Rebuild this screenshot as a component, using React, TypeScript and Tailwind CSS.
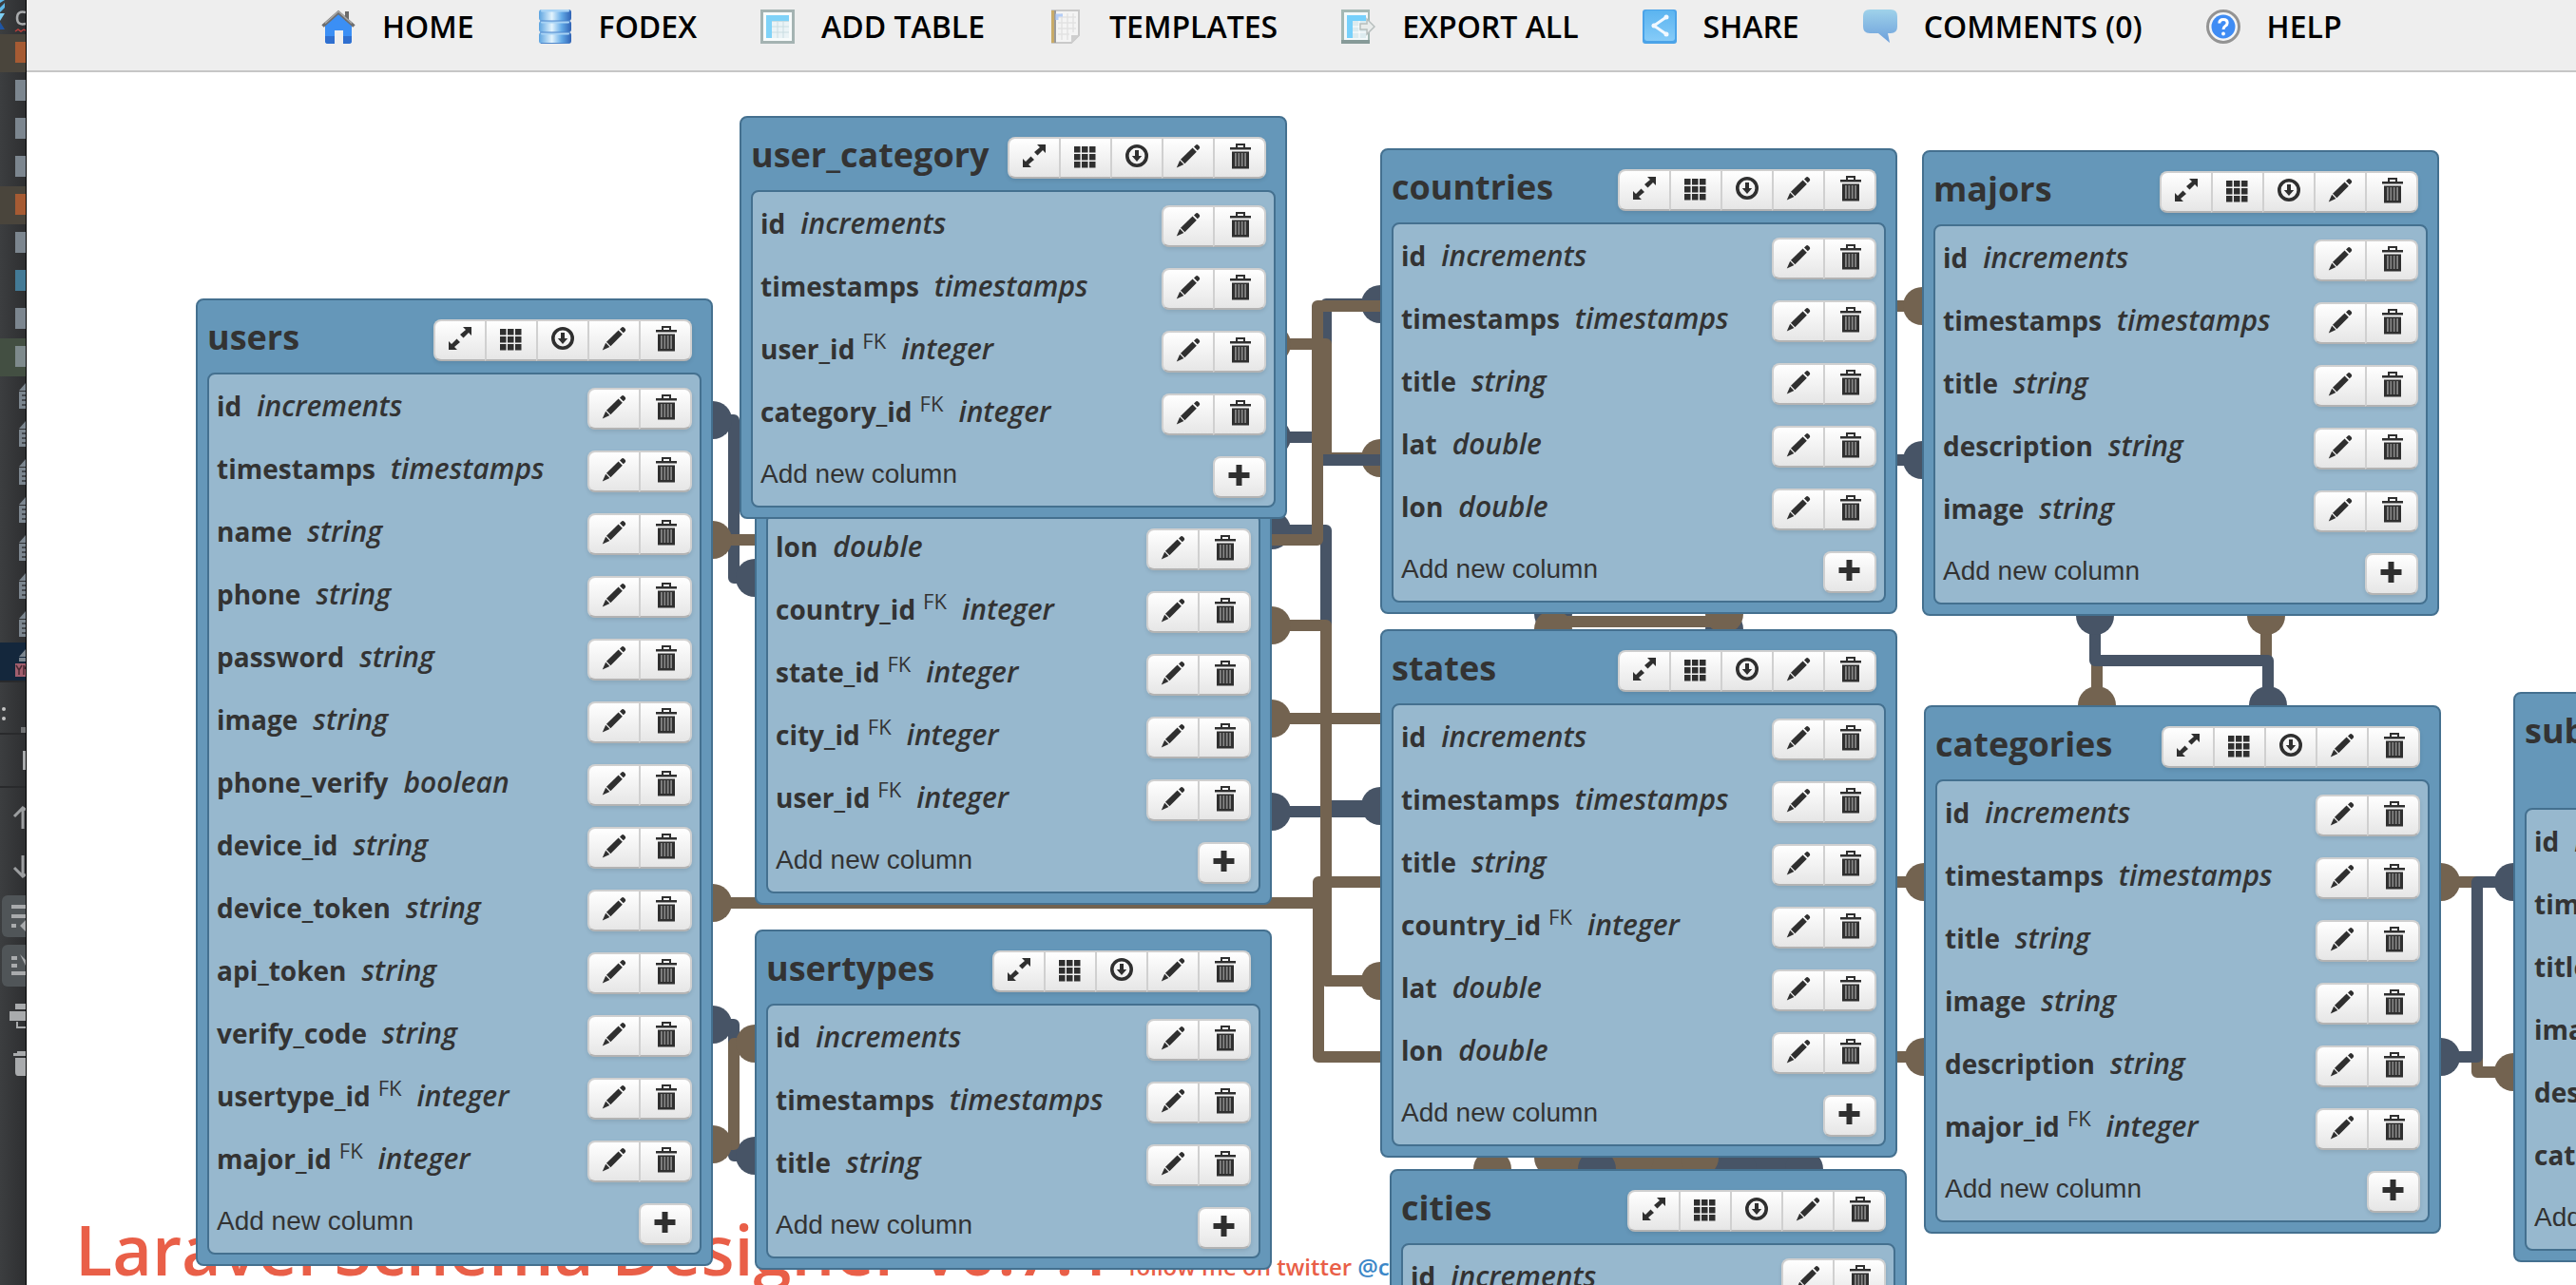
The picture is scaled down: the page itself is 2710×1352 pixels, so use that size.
import React from "react";

type Column = { name: string; type: string; fk?: boolean };
type Table = { title?: string; place: string; tall?: boolean; columns: Column[] };

const col = (name: string, type: string, fk = false): Column => ({ name, type, fk });

const base = [col("id", "increments"), col("timestamps", "timestamps")];

const tables: Table[] = [
  {
    title: "users",
    place: "left-[178px] top-[238px] w-[544px]",
    columns: [
      ...base,
      col("name", "string"),
      col("phone", "string"),
      col("password", "string"),
      col("image", "string"),
      col("phone_verify", "boolean"),
      col("device_id", "string"),
      col("device_token", "string"),
      col("api_token", "string"),
      col("verify_code", "string"),
      col("usertype_id", "integer", true),
      col("major_id", "integer", true),
    ],
  },
  {
    place: "left-[766px] top-[386px] w-[544px]",
    columns: [
      col("lon", "double"),
      col("country_id", "integer", true),
      col("state_id", "integer", true),
      col("city_id", "integer", true),
      col("user_id", "integer", true),
    ],
  },
  {
    title: "user_category",
    place: "left-[750px] top-[46px] w-[576px]",
    columns: [...base, col("user_id", "integer", true), col("category_id", "integer", true)],
  },
  {
    title: "usertypes",
    place: "left-[766px] top-[902px] w-[544px]",
    columns: [...base, col("title", "string")],
  },
  {
    title: "countries",
    place: "left-[1424px] top-[80px] w-[544px]",
    columns: [...base, col("title", "string"), col("lat", "double"), col("lon", "double")],
  },
  {
    title: "states",
    place: "left-[1424px] top-[586px] w-[544px]",
    columns: [
      ...base,
      col("title", "string"),
      col("country_id", "integer", true),
      col("lat", "double"),
      col("lon", "double"),
    ],
  },
  {
    title: "cities",
    place: "left-[1434px] top-[1154px] w-[544px]",
    columns: [...base, col("title", "string")],
  },
  {
    title: "majors",
    place: "left-[1994px] top-[82px] w-[544px]",
    columns: [...base, col("title", "string"), col("description", "string"), col("image", "string")],
  },
  {
    title: "categories",
    place: "left-[1996px] top-[666px] w-[544px]",
    columns: [
      ...base,
      col("title", "string"),
      col("image", "string"),
      col("description", "string"),
      col("major_id", "integer", true),
    ],
  },
  {
    title: "subcategories",
    place: "left-[2616px] top-[652px] w-[544px]",
    tall: true,
    columns: [
      ...base,
      col("title", "string"),
      col("image", "string"),
      col("description", "string"),
      col("category_id", "integer", true),
    ],
  },
];

const INK = "#2f2f2f";

const glyphs: Record<string, React.ReactNode> = {
  resize: (
    <g fill={INK}>
      <path d="M17 2h9v9l-3-3-5.500 5.500-3.500-3.500L20 5z" />
      <path d="M11 26H2v-9l3 3 5.500-5.500L14 18l-6 5z" />
    </g>
  ),
  grid: (
    <g fill={INK}>
      {[2, 10, 18].map((x) =>
        [4, 12, 20].map((y) => <rect key={`${x}-${y}`} x={x} y={y} width="6.500" height="6.500" />),
      )}
    </g>
  ),
  down: (
    <g>
      <circle cx="14" cy="14" r="10.200" fill="none" stroke={INK} strokeWidth="3.600" />
      <path d="M12 8h4v6h3.200L14 20l-5.200-6H12z" fill={INK} />
    </g>
  ),
  edit: (
    <g fill={INK}>
      <path d="M20 4.500l1.800-1.800c.8-.8 2-.8 2.800 0l1 1c.8.8.8 2 0 2.800L23.800 8.300z" />
      <path d="M18.600 5.600l4.200 4.200L10.400 22.200 6 17.800z" />
      <path d="M5.200 18.800l4.200 4.200-7.600 3.400z" />
    </g>
  ),
  trash: (
    <g>
      <path d="M11 5V2h8v3" fill="none" stroke={INK} strokeWidth="2" />
      <rect x="4" y="5" width="22" height="2.500" fill={INK} />
      <rect x="6" y="9.500" width="18" height="18" fill={INK} />
      <g fill="#858585">
        <rect x="9" y="11" width="1.800" height="14" />
        <rect x="12.400" y="11" width="1.800" height="14" />
        <rect x="15.800" y="11" width="1.800" height="14" />
        <rect x="19.200" y="11" width="1.800" height="14" />
      </g>
    </g>
  ),
  plus: <path d="M10.500 3h6v8h8v6h-8v8h-6v-8h-8v-6h8z" fill={INK} />,
};

function IconButton({ icon, label }: { icon: string; label: string }) {
  return (
    <button
      type="button"
      aria-label={label}
      className="-ml-0.5 flex h-11 w-14 items-start justify-center border-2 border-[#d0d0d0] border-b-[#b3b3b3] bg-linear-to-b from-white to-[#e6e6e6] pt-1 first:ml-0 first:rounded-l-lg last:rounded-r-lg"
    >
      <svg viewBox="0 0 28 30" className="h-[30px] w-7" aria-hidden="true">
        {glyphs[icon]}
      </svg>
    </button>
  );
}

function Group({ children }: { children: React.ReactNode }) {
  return <div className="flex rounded-lg shadow-[0_2px_4px_rgba(0,0,0,0.1)]">{children}</div>;
}

function TableCard({ table }: { table: Table }) {
  const { title, place, tall, columns } = table;
  return (
    <section
      className={`absolute ${place} rounded-lg border-2 border-[#44708f] bg-[#6597b9] px-2.5 pb-2.5 text-[#333]`}
    >
      <header className={`flex items-start justify-between pr-2.5 ${tall ? "h-30" : "h-19"}`}>
        {title && (
          <>
            <h2 className="text-[36px] leading-[78px] font-bold">{title}</h2>
            <div className={tall ? "pt-16" : "pt-5"}>
              <Group>
                <IconButton icon="resize" label="Resize table" />
                <IconButton icon="grid" label="Change colour" />
                <IconButton icon="down" label="Export table" />
                <IconButton icon="edit" label="Edit table" />
                <IconButton icon="trash" label="Delete table" />
              </Group>
            </div>
          </>
        )}
      </header>
      <div className="rounded-lg border-2 border-[#44708f] bg-[#97b8ce] px-2">
        <ul>
          {columns.map((c) => (
            <li key={c.name} className="flex h-[66px] items-center justify-between">
              <p className="text-[28px] leading-10 whitespace-nowrap">
                <strong className="font-bold">{c.name}</strong>
                {c.fk && <sup className="ml-2 text-[22px]">FK</sup>}
                <em className="ml-4 text-[30px] font-semibold">{c.type}</em>
              </p>
              <div className="mt-1.5">
                <Group>
                  <IconButton icon="edit" label={`Edit ${c.name}`} />
                  <IconButton icon="trash" label={`Delete ${c.name}`} />
                </Group>
              </div>
            </li>
          ))}
        </ul>
        <div className="flex h-[66px] items-center justify-between">
          <p className="font-['Liberation_Sans',Arial,sans-serif] text-[28px]">Add new column</p>
          <div className="mt-1.5">
            <Group>
              <IconButton icon="plus" label="Add new column" />
            </Group>
          </div>
        </div>
      </div>
    </section>
  );
}

const NAVY = "#475466";
const BROWN = "#736350";

const links: { color: string; d?: string; dots?: [number, number][] }[] = [
  { color: NAVY, d: "M750 442H772V608H794", dots: [[750, 442], [794, 608]] },
  { color: NAVY, d: "M750 1078H772V1216H794", dots: [[750, 1078], [794, 1216]] },
  { color: BROWN, d: "M750 1204H772V1098H794", dots: [[750, 1204], [794, 1098]] },
  { color: BROWN, dots: [[1452, 482]] },
  { color: NAVY, d: "M1338 460H1395V320H1452", dots: [[1338, 460], [1452, 320]] },
  { color: BROWN, d: "M1338 362H1395V482H1452", dots: [[1338, 362]] },
  { color: NAVY, d: "M1338 558H1386V484H2022", dots: [[2022, 484]] },
  { color: NAVY, d: "M1338 558H1395V848H1452", dots: [[1338, 558], [1452, 848]] },
  { color: NAVY, d: "M1338 854H1452", dots: [[1338, 854]] },
  { color: BROWN, d: "M750 568H1386V322H2022", dots: [[750, 568], [2022, 322]] },
  { color: BROWN, d: "M1338 756H1452", dots: [[1338, 756]] },
  { color: BROWN, d: "M1338 658H1395V1032H1452", dots: [[1338, 658], [1452, 1032]] },
  { color: BROWN, d: "M750 950H1387V928H2024", dots: [[750, 950], [2024, 928]] },
  { color: BROWN, d: "M1387 940V1112H2024", dots: [[2024, 1112]] },
  { color: BROWN, d: "M2384 648V695H2206V742", dots: [[2384, 648], [2206, 742]] },
  { color: NAVY, d: "M2204 648V695H2386V742", dots: [[2204, 648], [2386, 742]] },
  { color: BROWN, d: "M2568 928H2606V1128H2644", dots: [[2568, 928], [2644, 1128]] },
  { color: NAVY, d: "M2568 1112H2606V928H2644", dots: [[2568, 1112], [2644, 928]] },
  { color: NAVY, dots: [[1634, 646], [1814, 662]] },
  { color: BROWN, d: "M1634 654H1814", dots: [[1634, 662], [1814, 646]] },
  { color: NAVY, d: "M1790 1224H1890", dots: [[1898, 1230], [1828, 1230]] },
  { color: BROWN, d: "M1634 1224H1790", dots: [[1570, 1230], [1634, 1218], [1720, 1218], [1788, 1218]] },
  { color: NAVY, dots: [[1680, 1230]] },
];

function Links() {
  return (
    <svg
      viewBox="28 76 2682 1276"
      className="absolute top-0 left-0 h-[1276px] w-[2682px] max-w-none"
      aria-hidden="true"
    >
      {links.map((link, i) => (
        <g key={i}>
          {link.d && (
            <path d={link.d} fill="none" stroke={link.color} strokeWidth="12" strokeLinejoin="round" />
          )}
          {link.dots?.map(([x, y]) => (
            <circle key={`${x}-${y}`} cx={x} cy={y} r="20" fill={link.color} />
          ))}
        </g>
      ))}
    </svg>
  );
}

const menuIcons: Record<string, React.ReactNode> = {
  home: (
    <>
      <path d="M4 15L18 4l14 11v18q0 3-3 3h-6V22h-9v14H7q-3 0-3-3z" fill="#3b8ff5" />
      <path d="M4 28h10v8H7q-3 0-3-3zM23 28h9v5q0 3-3 3h-6z" fill="#2f6fcf" />
      <path d="M25 2h4v10h-4z" fill="#6b6b6b" />
      <path d="M1.500 17.500L18 3l16.500 14.500" fill="none" stroke="#6e6e6e" strokeWidth="3.500" />
      <path d="M4 14.500L18 2l14 12.500" fill="none" stroke="#a9a9a9" strokeWidth="1.500" />
    </>
  ),
  database: (
    <>
      <defs>
        <linearGradient id="drum" x1="0" x2="1" y1="0" y2="0">
          <stop offset="0" stopColor="#5ba3e0" />
          <stop offset="0.400" stopColor="#e2f3fd" />
          <stop offset="0.700" stopColor="#64abe8" />
          <stop offset="1" stopColor="#2f62b4" />
        </linearGradient>
      </defs>
      {[0, 12, 24].map((y) => (
        <g key={y}>
          <rect x="1" y={y} width="34" height="12" rx="3" fill="url(#drum)" />
          <rect x="3" y={y} width="30" height="2.500" rx="1" fill="#a8d3f5" />
        </g>
      ))}
      <path d="M2 12h32M2 24h32M3 35.500h30" stroke="#4d86cc" strokeWidth="1" />
    </>
  ),
  table: (
    <>
      <rect width="36" height="36" fill="#a4b3b2" />
      <rect x="3" y="3" width="30" height="30" fill="#f7fbfb" />
      <rect x="6" y="6" width="24" height="24" fill="#eaf3f6" />
      <path d="M6 6h24v6H12v18H6z" fill="#7fd2f8" />
      <path d="M12 12.500h18M12 18h18M12 24h18M18 12v18M24 12v18" stroke="#c9dde2" strokeWidth="1" />
    </>
  ),
  template: (
    <>
      <path d="M4 1h28v26l-8 8H4z" fill="#f4f4f4" stroke="#c9c9c9" strokeWidth="2" />
      <path d="M10 8h19M10 14h19M10 20h19M10 26h12M14 4v28M20 4v28M26 4v20" stroke="#e2e2e2" strokeWidth="1.500" />
      <path d="M3 1h3v34H3z" fill="#c9ab68" />
      <path d="M6 1h2v34H6z" fill="#9a9a9a" />
      <path d="M9 11V6h6" fill="none" stroke="#b4cdf7" strokeWidth="3" />
      <path d="M24 35v-8h8z" fill="#cfcfcf" />
    </>
  ),
  export: (
    <>
      <rect width="30" height="36" fill="#a4b8b4" />
      <path d="M0 32h30v4H0z" fill="#869a98" />
      <rect x="3" y="3" width="25" height="29" fill="#f3f9fa" />
      <rect x="6" y="6" width="20" height="24" fill="#dcebef" />
      <path d="M6 6h20v6H12v18H6z" fill="#76d0fb" />
      <path d="M12 18h14M12 24h14M19 12v18" stroke="#fff" strokeWidth="1" />
      <path d="M20 15h7v-5l8 8-8 8v-5h-7z" fill="#e9eceb" stroke="#b6bebd" strokeWidth="1.500" />
    </>
  ),
  share: (
    <>
      <defs>
        <linearGradient id="tile" x1="0" x2="0" y1="0" y2="1">
          <stop offset="0" stopColor="#5bb4f0" />
          <stop offset="1" stopColor="#85cbf8" />
        </linearGradient>
      </defs>
      <rect width="36" height="36" rx="3" fill="#4ba3e8" />
      <rect x="2" y="1" width="32" height="32" rx="3" fill="url(#tile)" />
      <path d="M25 8L12 17l13 9" fill="none" stroke="#f2f9ff" strokeWidth="3" />
      <circle cx="25" cy="8" r="2.500" fill="#f2f9ff" />
      <circle cx="12" cy="17" r="2.500" fill="#f2f9ff" />
      <circle cx="25" cy="26" r="2.500" fill="#f2f9ff" />
    </>
  ),
  comment: (
    <>
      <defs>
        <linearGradient id="bubble" x1="0" x2="0" y1="0" y2="1">
          <stop offset="0" stopColor="#9fd2ea" />
          <stop offset="1" stopColor="#6c9fdb" />
        </linearGradient>
      </defs>
      <path d="M7 0h22q7 0 7 7v11q0 7-7 7h-3l2 10-12-10H7q-7 0-7-7V7q0-7 7-7z" fill="url(#bubble)" />
    </>
  ),
  help: (
    <>
      <circle cx="18" cy="18" r="16.500" fill="#f4f6f8" stroke="#939393" strokeWidth="3" />
      <circle cx="18" cy="18" r="12.500" fill="#3f8cf4" />
      <path d="M13.800 14.500q0-4 4.200-4t4.200 3.600q0 2-2 3.200T18 21" fill="none" stroke="#fff" strokeWidth="3" />
      <circle cx="18" cy="25.500" r="1.900" fill="#fff" />
    </>
  ),
};

const menu = [
  ["home", "HOME"],
  ["database", "FODEX"],
  ["table", "ADD TABLE"],
  ["template", "TEMPLATES"],
  ["export", "EXPORT ALL"],
  ["share", "SHARE"],
  ["comment", "COMMENTS (0)"],
  ["help", "HELP"],
];

function MenuBar() {
  return (
    <nav className="h-19 shrink-0 border-b-2 border-[#c6c6c6] bg-[#eeeeee] pl-[310px]">
      <ul className="flex gap-[67px]">
        {menu.map(([icon, label]) => (
          <li key={label}>
            <a href="#" className="flex h-14 items-center gap-7 whitespace-nowrap">
              <svg viewBox="0 0 36 36" className="size-9" aria-hidden="true">
                {menuIcons[icon]}
              </svg>
              <span className="text-[32px] font-semibold text-black">{label}</span>
            </a>
          </li>
        ))}
      </ul>
    </nav>
  );
}

const files: { row: string; mark: string }[] = [
  { row: "bg-[#4a453c]", mark: "bg-[#a65b33]" },
  { row: "", mark: "bg-[#7c868f]" },
  { row: "", mark: "bg-[#7c868f]" },
  { row: "", mark: "bg-[#7c868f]" },
  { row: "bg-[#4a453c]", mark: "bg-[#a65b33]" },
  { row: "", mark: "bg-[#7c868f]" },
  { row: "", mark: "bg-[#437a96]" },
  { row: "", mark: "bg-[#7c868f]" },
  { row: "bg-[#434f42]", mark: "bg-[#7e8a8c]" },
];

function Strip() {
  return (
    <aside className="flex w-7 shrink-0 flex-col overflow-hidden border-r border-black bg-linear-to-r from-[#3c3e40] to-[#2e2f31]">
      <div className="flex h-9 shrink-0">
        <svg viewBox="0 0 27 36" className="h-9 w-[27px]" aria-hidden="true">
          <path d="M0 3l5-3H0zM0 8l5-5v5l-5 5z" fill="#5fb8e8" />
          <path d="M0 14h5L0 22z" fill="#7fd0f5" />
          <path d="M0 23l5 8H0z" fill="#1f55a5" />
          <path d="M27 13q-9-2-9 6t9 6" fill="none" stroke="#a9abad" strokeWidth="2.500" />
          <path d="M16 33l3-2 3 2 3-2 2 1" fill="none" stroke="#b8403c" strokeWidth="1.500" />
        </svg>
      </div>
      {files.map((f, i) => (
        <div key={i} className={`flex h-10 shrink-0 items-center justify-end pb-0.5 ${f.row}`}>
          <div className={`h-[22px] w-[11px] ${f.mark}`} />
        </div>
      ))}
      {[0, 1, 2, 3, 4, 5, 6, 7].map((i) => (
        <div key={i} className={`flex h-10 shrink-0 justify-end ${i === 7 ? "bg-[#14273c]" : ""}`}>
          <svg viewBox="0 0 11 40" className="h-10 w-[11px]" aria-hidden="true">
            <path d="M4 15l7-8v8z" fill="#7c868f" />
            <path d={i === 7 ? "M4 16h7v4H4z" : "M4 16h7v18H4z"} fill="#7c868f" />
            {i !== 7 && <path d="M7 20h4M7 25h4M7 30h4" stroke="#33363a" strokeWidth="1.500" />}
            {i === 7 && <rect y="22" width="11" height="14" fill="#a25f6e" />}
            {i === 7 && <path d="M1 24l3 5v5m0-5l3-5m2 10v-10l2 4" stroke="#4a2c36" fill="none" strokeWidth="1.500" />}
          </svg>
        </div>
      ))}
      <div className="flex h-[57px] shrink-0 items-center border-y-2 border-[#292a2c]">
        <div className="flex flex-col gap-1.5 pt-3 pl-0.5">
          <i className="size-1 rounded-full bg-[#c4c4c4]" />
          <i className="size-1 rounded-full bg-[#c4c4c4]" />
        </div>
        <div className="ml-auto h-1.5 w-[5px] self-end bg-[#717375]" />
      </div>
      <div className="flex h-14 shrink-0 items-center justify-end border-b-2 border-[#292a2c]">
        <div className="h-5 w-[3px] bg-[#a9abad]" />
      </div>
      <svg viewBox="0 829 27 320" className="h-80 w-[27px] shrink-0" aria-hidden="true">
        <g fill="none" stroke="#9c9ea0" strokeWidth="3">
          <path d="M15 859l9-9 3 2M24 850v22" />
          <path d="M15 913l9 9 3-2M24 922v-22" />
        </g>
        <rect x="2" y="942" width="34" height="44" rx="6" fill="#505558" />
        <rect x="2" y="994" width="34" height="44" rx="6" fill="#505558" />
        <g fill="#a9abad">
          <path d="M12 952h15v4H12zM12 962h15v4H12zM12 972h5v4h-5zM21 974l6-6v12z" />
          <path d="M12 1006h6v4h-6zM12 1014h6v4h-6zM12 1022h15v4H12zM21 1004l6 6v6z" />
          <path d="M16 1056h11v6H16zM10 1064h17v10H10zM17 1075h2v5h8v2H17z" />
          <path d="M14 1108h4v-2h9v5H14zM16 1113h11v19H19q-3 0-3-4z" />
        </g>
      </svg>
    </aside>
  );
}

export default function App() {
  return (
    <div className="flex h-screen overflow-hidden bg-white font-['Open_Sans','Noto_Sans',sans-serif]">
      <Strip />
      <div className="flex min-w-0 flex-1 flex-col">
        <MenuBar />
        <main className="relative flex-1 overflow-hidden">
          <h1 className="absolute top-[1188px] left-[51px] text-[72px] leading-[100px] font-semibold whitespace-nowrap text-[#e95f48]">
            Laravel Schema Designer v0.7.1
            <small className="ml-4 text-[24px]">
              follow me on twitter{" "}
              <a href="#" className="text-[#3b87c8]">
                @c
              </a>
            </small>
          </h1>
          <Links />
          {tables.map((t) => (
            <TableCard key={t.place} table={t} />
          ))}
        </main>
      </div>
    </div>
  );
}
